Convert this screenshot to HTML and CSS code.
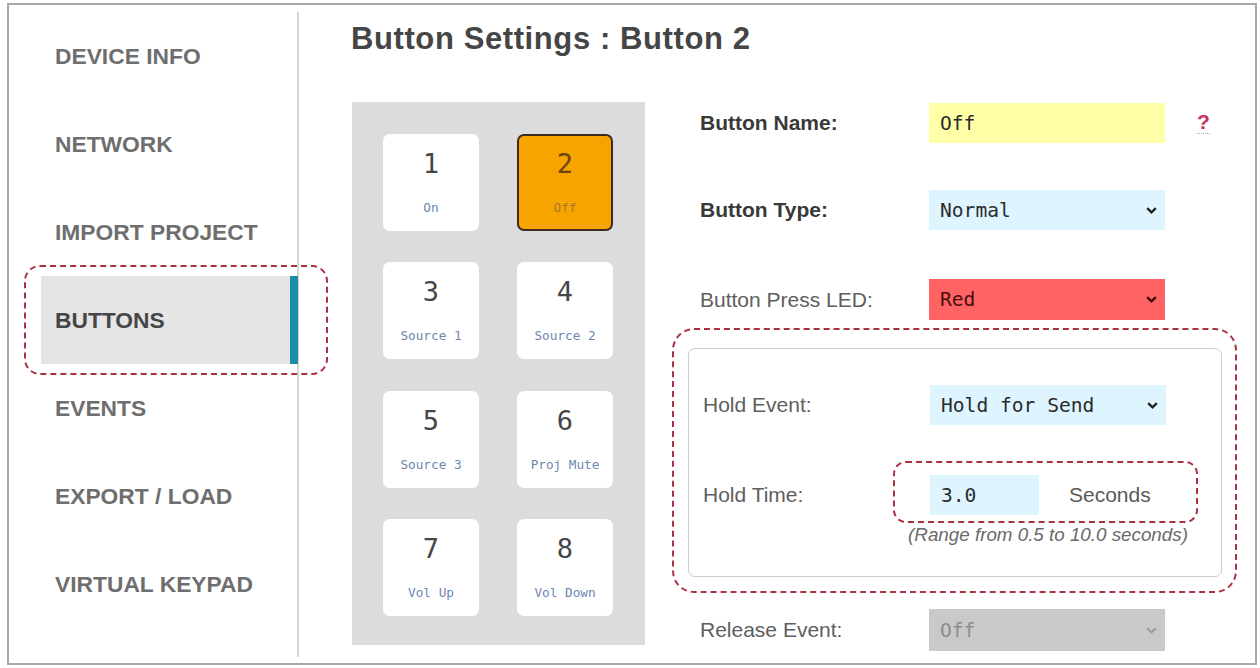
FILE: index.html
```html
<!DOCTYPE html>
<html>
<head>
<meta charset="utf-8">
<link rel="stylesheet" href="styles.css">
</head>
<body>
<div class="frame">
  <nav class="sidebar">
    <div class="nav-item">DEVICE INFO</div>
    <div class="nav-item">NETWORK</div>
    <div class="nav-item">IMPORT PROJECT</div>
    <div class="nav-item active">BUTTONS<span class="mark mark-nav"></span></div>
    <div class="nav-item">EVENTS</div>
    <div class="nav-item">EXPORT / LOAD</div>
    <div class="nav-item">VIRTUAL KEYPAD</div>
  </nav>
  <main class="main">
    <h1 class="title">Button Settings : Button 2</h1>
    <div class="content">
      <div class="keypad">
        <div class="key"><span class="num">1</span><span class="cap">On</span></div>
        <div class="key selected"><span class="num">2</span><span class="cap">Off</span></div>
        <div class="key"><span class="num">3</span><span class="cap">Source 1</span></div>
        <div class="key"><span class="num">4</span><span class="cap">Source 2</span></div>
        <div class="key"><span class="num">5</span><span class="cap">Source 3</span></div>
        <div class="key"><span class="num">6</span><span class="cap">Proj Mute</span></div>
        <div class="key"><span class="num">7</span><span class="cap">Vol Up</span></div>
        <div class="key"><span class="num">8</span><span class="cap">Vol Down</span></div>
      </div>
      <div class="form">
        <div class="row row-name">
          <span class="label strong">Button Name:</span>
          <div class="field yellow">Off</div>
          <span class="help">?</span>
        </div>
        <div class="row row-type">
          <span class="label strong">Button Type:</span>
          <div class="field cyan">Normal<svg class="chev" width="11" height="7" viewBox="0 0 11 7"><polyline points="1.2,1.2 5.5,5.3 9.8,1.2" fill="none" stroke="#222" stroke-width="2.4"/></svg></div>
        </div>
        <div class="row row-led">
          <span class="label">Button Press LED:</span>
          <div class="field red">Red<svg class="chev" width="11" height="7" viewBox="0 0 11 7"><polyline points="1.2,1.2 5.5,5.3 9.8,1.2" fill="none" stroke="#3a0a0a" stroke-width="2.4"/></svg></div>
        </div>
        <div class="holdbox">
          <span class="mark mark-hold"></span>
          <div class="row">
            <span class="label">Hold Event:</span>
            <div class="field cyan">Hold for Send<svg class="chev" width="11" height="7" viewBox="0 0 11 7"><polyline points="1.2,1.2 5.5,5.3 9.8,1.2" fill="none" stroke="#222" stroke-width="2.4"/></svg></div>
          </div>
          <div class="row row-time">
            <span class="label">Hold Time:</span>
            <div class="timegroup">
              <span class="mark mark-time"></span>
              <div class="field cyan small">3.0</div>
              <span class="unit">Seconds</span>
            </div>
          </div>
          <div class="range-row">
            <span class="range">(Range from 0.5 to 10.0 seconds)</span>
          </div>
        </div>
        <div class="row row-release">
          <span class="label">Release Event:</span>
          <div class="field gray">Off<svg class="chev" width="11" height="7" viewBox="0 0 11 7"><polyline points="1.2,1.2 5.5,5.3 9.8,1.2" fill="none" stroke="#9a9a9a" stroke-width="2"/></svg></div>
        </div>
      </div>
    </div>
  </main>
</div>
</body>
</html>
```

FILE: styles.css
```css
* { box-sizing: border-box; }
html, body { margin: 0; padding: 0; background: #ffffff; }
body { width: 1260px; height: 668px; overflow: hidden; font-family: "Liberation Sans", Arial, sans-serif; }

.frame {
  margin: 3px 0 0 7px;
  width: 1250px;
  height: 662px;
  border: 2px solid #a9a9a9;
  display: flex;
  position: relative;
}

.sidebar {
  width: 290px;
  margin: 7px 0 6px 0;
  padding: 0 0 0 32px;
  border-right: 2px solid #d6d6d6;
  display: flex;
  flex-direction: column;
}
.nav-item {
  height: 88px;
  display: flex;
  align-items: center;
  padding-left: 14px;
  font-size: 22.8px;
  font-weight: bold;
  color: #6e6e6e;
  position: relative;
}
.nav-item.active {
  background: #e5e5e5;
  color: #464646;
  border-right: 8px solid #1a8ea6;
  margin-right: -1px;
}

.mark {
  position: absolute;
  border: 2.6px dashed #a8323f;
  pointer-events: none;
}
.mark-nav { top: -11px; left: -17px; right: -38px; bottom: -11px; border-radius: 16px; }
.mark-hold { top: -21px; left: -17px; right: -16px; bottom: -17px; border-radius: 22px; }
.mark-time { top: -14px; left: -37px; right: -32px; bottom: -8px; border-radius: 13px; }

.main {
  flex: 1;
  padding: 16px 0 0 53px;
  display: flex;
  flex-direction: column;
}
.title {
  margin: 0 0 0 -1px;
  font-size: 31px;
  line-height: 36px;
  letter-spacing: 0.6px;
  font-weight: bold;
  color: #454545;
}
.content {
  margin-top: 45px;
  display: flex;
  gap: 55px;
}

.keypad {
  width: 293px;
  height: 543px;
  background: #dcdcdc;
  padding: 32px 31px 0 31px;
  display: grid;
  grid-template-columns: 96px 96px;
  grid-auto-rows: 97px;
  column-gap: 38px;
  row-gap: 31.3px;
}
.key {
  background: #ffffff;
  border-radius: 7px;
  display: flex;
  flex-direction: column;
  align-items: center;
  padding-top: 15px;
  font-family: "DejaVu Sans Mono", "Liberation Mono", monospace;
}
.num {
  font-size: 27px;
  line-height: 30px;
  color: #464646;
}
.cap {
  margin-top: 21px;
  font-size: 12.7px;
  line-height: 16px;
  color: #6d87b0;
}
.key.selected {
  background: #f8a400;
  border: 2px solid #3d2c1e;
  padding-top: 13px;
}
.key.selected .num { color: #6a4510; }
.key.selected .cap { color: #a9772f; }

.form {
  width: 520px;
  display: flex;
  flex-direction: column;
}
.row {
  display: flex;
  align-items: center;
  height: 40px;
}
.row-name { margin-top: 1px; }
.row-type { margin-top: 47px; }
.row-led { margin-top: 49px; height: 41px; }
.row-time { margin-top: 50px; }
.row-release { margin-top: 32px; height: 42px; }

.label {
  width: 229px;
  font-size: 21px;
  color: #5e5e5e;
}
.label.strong { font-weight: bold; color: #393939; }

.field {
  width: 236px;
  height: 100%;
  display: flex;
  align-items: center;
  justify-content: space-between;
  padding: 0 8px 0 11px;
  font-family: "DejaVu Sans Mono", "Liberation Mono", monospace;
  font-size: 19.6px;
  color: #2b2b2b;
}
.chev { flex: none; }
.yellow { background: #ffffa8; }
.cyan { background: #def5ff; }
.red { background: #ff6363; color: #4a0d0d; }
.gray { background: #c9c9c9; color: #8c8c8c; }
.field.small { width: 109px; }

.help {
  margin-left: 32px;
  font-size: 21px;
  font-weight: bold;
  color: #c8325e;
  line-height: 20px;
  border-bottom: 1px dotted #aaaaaa;
  padding-bottom: 1px;
}

.holdbox {
  position: relative;
  margin-top: 28px;
  margin-left: -12px;
  width: 534px;
  border: 1.5px solid #cccccc;
  border-radius: 7px;
  padding: 36px 0 31px 14px;
}
.holdbox .label { width: 227px; }

.timegroup {
  position: relative;
  width: 236px;
  height: 100%;
  display: flex;
  align-items: center;
}
.unit {
  margin-left: 30px;
  font-size: 21px;
  color: #5a5a5a;
}
.range-row {
  margin-top: 10px;
  margin-left: 227px;
  width: 236px;
  display: flex;
  justify-content: center;
  white-space: nowrap;
}
.range {
  font-size: 18.8px;
  line-height: 20px;
  font-style: italic;
  color: #6a6a6a;
}
```
